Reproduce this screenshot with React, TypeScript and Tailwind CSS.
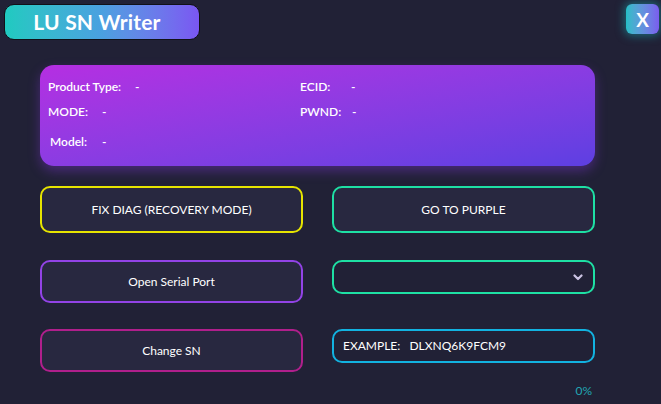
const infoRows = [
  [
    { label: 'Product Type:', w: 'w-[87px]' },
    { label: 'ECID:', w: 'w-[51px]' },
  ],
  [
    { label: 'MODE:', w: 'w-[54px]' },
    { label: 'PWND:', w: 'w-[52px]' },
  ],
];

function OutlineButton({ label, border, h }: { label: string; border: string; h: string }) {
  return (
    <button
      className={`w-full rounded-[10px] border-2 bg-[#282840] text-[12px] text-white ${h} ${border}`}
    >
      {label}
    </button>
  );
}

export default function App() {
  return (
    <div
      className="relative w-[661px] h-[404px] overflow-hidden bg-[#212136] text-white"
      style={{ fontFamily: 'Lato, "Open Sans", sans-serif' }}
    >
      {/* Header */}
      <div className="flex items-start justify-between pl-[4px] pr-[2px] pt-[4px]">
        <div className="flex h-[36px] w-[196px] items-center justify-center rounded-[10px] border-[1.5px] border-[#111118] bg-gradient-to-r from-[#1fcac0] via-[#4aa0e0] to-[#7a56f2]">
          <span className="pr-[10px] text-[21px] font-bold tracking-[0.2px]">LU SN Writer</span>
        </div>
        <div className="flex h-[30px] w-[33px] items-center justify-center rounded-[6px] bg-gradient-to-r from-[#22bfc6] to-[#7a5cef] shadow-[0_0_8px_2px_rgba(26,160,170,0.55)]">
          <span className="text-[19px] font-bold leading-none">X</span>
        </div>
      </div>

      {/* Device info panel */}
      <div className="ml-[40px] mt-[25px] h-[101px] w-[555px] rounded-[14px] bg-gradient-to-br from-[#b52ee2] to-[#5d3fe2] pl-[8px] pt-[14px] text-[12px] font-semibold shadow-[0_5px_12px_rgba(120,50,200,0.45)]">
        {infoRows.map((row, i) => (
          <div key={i} className="flex h-[25px] leading-[16px]">
            <div className="flex w-[252px]">
              <span className={row[0].w}>{row[0].label}</span>
              <span>-</span>
            </div>
            <div className="flex">
              <span className={row[1].w}>{row[1].label}</span>
              <span>-</span>
            </div>
          </div>
        ))}
        <div className="mt-[5px] flex pl-[2px] leading-[16px]">
          <span className="w-[52px]">Model:</span>
          <span>-</span>
        </div>
      </div>

      {/* Actions */}
      <div className="ml-[40px] mt-[20px] grid w-[555px] grid-cols-2 gap-x-[29px]">
        <div className="flex flex-col">
          <OutlineButton label="FIX DIAG (RECOVERY MODE)" border="border-[#e6e400]" h="h-[47px]" />
          <div className="mt-[27px]">
            <OutlineButton label="Open Serial Port" border="border-[#9243e6]" h="h-[43px]" />
          </div>
          <div className="mt-[26px]">
            <OutlineButton label="Change SN" border="border-[#b01f8c]" h="h-[43px]" />
          </div>
        </div>
        <div className="flex flex-col">
          <OutlineButton label="GO TO PURPLE" border="border-[#1ee0a4]" h="h-[47px]" />
          <div className="mt-[27px] flex h-[34px] w-full items-center justify-end rounded-[10px] border-2 border-[#1ee0a4] bg-[#212136] pr-[10px]">
            <svg width="10" height="7" viewBox="0 0 10 7" fill="none">
              <path d="M1.5 1.5L5 5L8.5 1.5" stroke="#cbc3e3" strokeWidth="2.2" strokeLinecap="round" strokeLinejoin="round" />
            </svg>
          </div>
          <div className="mt-[35px] flex h-[34px] w-full items-center rounded-[10px] border-2 border-[#12b2e0] bg-[#212136] pl-[9px] text-[12px] whitespace-pre">
            {'EXAMPLE:   DLXNQ6K9FCM9'}
          </div>
          <div className="mt-[20px] pr-[3px] text-right text-[12px] leading-[16px] text-[#22a6b4]">0%</div>
        </div>
      </div>
    </div>
  );
}
